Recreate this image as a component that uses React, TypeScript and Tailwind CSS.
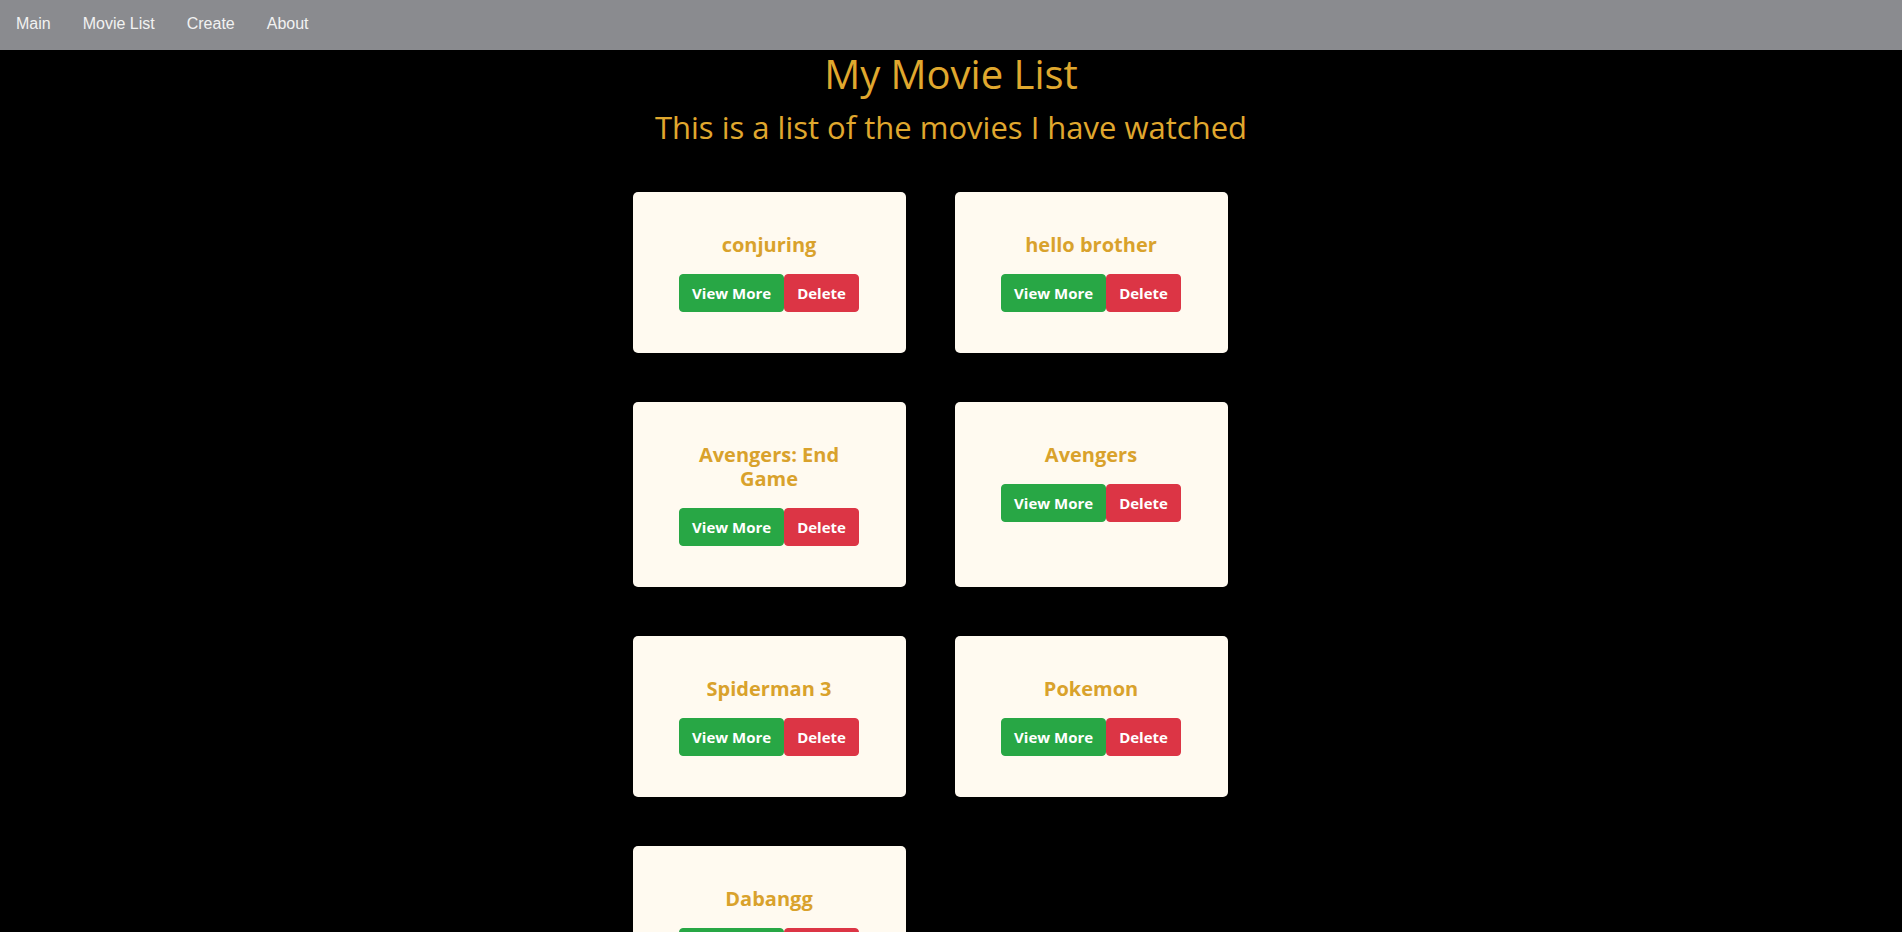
const movies = [
  "conjuring",
  "hello brother",
  "Avengers: End Game",
  "Avengers",
  "Spiderman 3",
  "Pokemon",
  "Dabangg",
];

const links = ["Main", "Movie List", "Create", "About"];

const MovieCard = ({ title }: { title: string }) => {
  return (
    <div className="bg-[#fffaf0] rounded-[5px] px-10 pt-[41px] pb-[41px] flex flex-col items-center">
      <h3 className="text-[20px] leading-6 font-bold text-[#d9a22c] mb-[17px] text-center">
        {title}
      </h3>
      <div className="flex">
        <button className="bg-[#28a745] border border-[#28a745] text-white font-bold text-[15px] leading-6 px-3 py-1.5 rounded">
          View More
        </button>
        <button className="bg-[#dc3545] border border-[#dc3545] text-white font-bold text-[15px] leading-6 px-3 py-1.5 rounded">
          Delete
        </button>
      </div>
    </div>
  );
};

export default function App() {
  return (
    <div className="min-h-screen bg-black">
      {/* top nav */}
      <nav className="h-[50px] bg-[#8a8b8f] flex font-['Liberation_Sans',Arial,sans-serif]">
        {links.map((l) => (
          <a
            key={l}
            href="#"
            className="px-4 pt-[14px] text-[16px] leading-[19px] text-[#f2f2f2]"
          >
            {l}
          </a>
        ))}
      </nav>

      <main className="font-['Comic_Sans_MS','Open_Sans',sans-serif] text-center pb-10">
        <h1 className="text-[40px] leading-[48px] font-medium mb-[10px] text-[#e0a82e]">
          My Movie List
        </h1>
        <h2 className="text-[31px] leading-[38px] font-medium text-[#e0a82e]">
          This is a list of the movies I have watched
        </h2>

        <div className="flex justify-center mt-[46px]">
          <div className="grid grid-cols-[273px_273px] gap-[49px] mr-[42px]">
            {movies.map((m) => (
              <MovieCard key={m} title={m} />
            ))}
          </div>
        </div>
      </main>
    </div>
  );
}
